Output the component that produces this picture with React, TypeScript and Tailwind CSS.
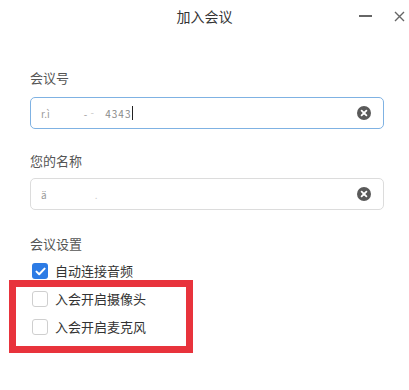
import React from 'react';

function ClearIcon() {
  return (
    <svg width="14" height="14" viewBox="0 0 14 14">
      <circle cx="7" cy="7" r="7" fill="#5a5a5a" />
      <path d="M4.6 4.6 L9.4 9.4 M9.4 4.6 L4.6 9.4" stroke="#fff" strokeWidth="1.8" strokeLinecap="round" />
    </svg>
  );
}

function Check({ checked, label }: { checked?: boolean; label: string }) {
  return (
    <div className="flex h-7 items-center gap-[7px] pl-[2px]">
      {checked ? (
        <span className="flex h-4 w-4 items-center justify-center rounded-[3px] bg-[#2c7be5]">
          <svg width="11" height="9" viewBox="0 0 11 9">
            <path d="M1.5 4.6 L4.2 7.2 L9.6 1.6" fill="none" stroke="#fff" strokeWidth="2" strokeLinecap="round" strokeLinejoin="round" />
          </svg>
        </span>
      ) : (
        <span className="h-4 w-4 rounded-[3px] border border-[#cfcfcf] bg-white" />
      )}
      <span className="text-[13px] leading-5 text-[#333]">{label}</span>
    </div>
  );
}

export default function App() {
  return (
    <div
      className="relative h-[390px] w-[409px] overflow-hidden bg-white"
      style={{ fontFamily: '"Noto Sans CJK SC", "Noto Sans", sans-serif' }}
    >
      {/* title bar */}
      <div className="relative flex h-8 items-center justify-center">
        <span className="text-[14px] text-[#333]">加入会议</span>
        <div className="absolute right-[4px] top-0 flex h-8 items-center gap-[22px]">
          <span className="block h-[2px] w-[13px] bg-[#666]" />
          <svg width="11" height="11" viewBox="0 0 11 11">
            <path d="M1 1 L10 10 M10 1 L1 10" stroke="#666" strokeWidth="1.4" />
          </svg>
        </div>
      </div>

      <div className="pl-[30px] pr-[25px]">
        <div className="mt-[36px] h-5 text-[13px] leading-5 text-[#555]">会议号</div>
        <div className="mt-[9px] flex h-8 items-center rounded-[5px] border border-[#7fb2e3] pl-[10px] pr-[12px]">
          <div className="flex flex-1 items-center text-[10px] text-[#9a9a9a]">
            <span>r.ì</span>
            <span className="ml-[34px]">-‐</span>
            <span className="ml-[8px] tracking-[1px] text-[#888]">4343</span>
            <span className="ml-[1px] h-[14px] w-px bg-[#222]" />
          </div>
          <ClearIcon />
        </div>

        <div className="mt-[22px] h-5 text-[13px] leading-5 text-[#555]">您的名称</div>
        <div className="mt-[7px] flex h-8 items-center rounded-[5px] border border-[#dcdcdc] pl-[10px] pr-[12px]">
          <div className="flex flex-1 items-center text-[10px] text-[#9a9a9a]">
            <span>ä</span>
            <span className="ml-[48px] text-[#ccc]">.</span>
          </div>
          <ClearIcon />
        </div>

        <div className="mt-[24px] h-5 text-[13px] leading-5 text-[#555]">会议设置</div>
        <div className="mt-[3px]">
          <Check checked label="自动连接音频" />
          <Check label="入会开启摄像头" />
          <Check label="入会开启麦克风" />
        </div>
      </div>

      {/* red annotation box */}
      <div className="absolute left-[9px] top-[280px] h-[73px] w-[184px] border-[7px] border-[#e8333c]" />
    </div>
  );
}
